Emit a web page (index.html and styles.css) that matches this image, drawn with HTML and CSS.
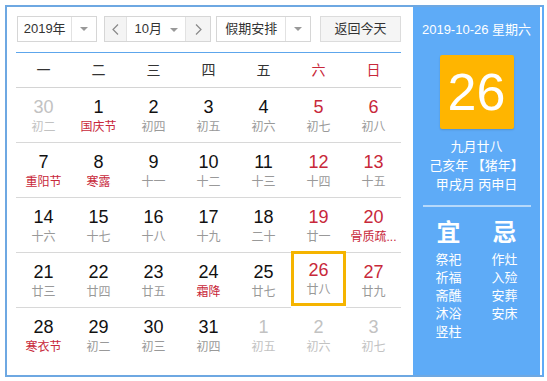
FILE: index.html
```html
<!DOCTYPE html>
<html lang="zh-CN">
<head>
    <meta charset="UTF-8">
    <title>万年历</title>
    <link rel="stylesheet" href="styles.css">
</head>
<body>
<div class="calendar">
    <div class="main">
        <!-- 顶部选择条 -->
        <div class="toolbar">
            <div class="select select-year">
                <span class="select-text">2019年</span>
                <span class="select-arrow"><i class="tri"></i></span>
            </div>
            <div class="month-box">
                <a href="javascript:;" class="nav-btn"><svg width="7" height="11" viewBox="0 0 7 11"><polyline points="6,0.5 1,5.5 6,10.5" fill="none" stroke="#888" stroke-width="1.2"/></svg></a>
                <div class="month-mid">10月 <i class="tri"></i></div>
                <a href="javascript:;" class="nav-btn nav-next"><svg width="7" height="11" viewBox="0 0 7 11"><polyline points="1,0.5 6,5.5 1,10.5" fill="none" stroke="#888" stroke-width="1.2"/></svg></a>
            </div>
            <div class="select select-holiday">
                <span class="select-text">假期安排</span>
                <span class="select-arrow"><i class="tri"></i></span>
            </div>
            <a href="javascript:;" class="btn-today">返回今天</a>
        </div>

        <!-- 星期 -->
        <ul class="week">
            <li>一</li><li>二</li><li>三</li><li>四</li><li>五</li><li class="red">六</li><li class="red">日</li>
        </ul>

        <!-- 日期 -->
        <ul class="days">
            <li class="other"><b>30</b><span>初二</span></li>
            <li><b>1</b><span class="fest">国庆节</span></li>
            <li><b>2</b><span>初四</span></li>
            <li><b>3</b><span>初五</span></li>
            <li><b>4</b><span>初六</span></li>
            <li class="weekend"><b>5</b><span>初七</span></li>
            <li class="weekend"><b>6</b><span>初八</span></li>

            <li><b>7</b><span class="fest">重阳节</span></li>
            <li><b>8</b><span class="fest">寒露</span></li>
            <li><b>9</b><span>十一</span></li>
            <li><b>10</b><span>十二</span></li>
            <li><b>11</b><span>十三</span></li>
            <li class="weekend"><b>12</b><span>十四</span></li>
            <li class="weekend"><b>13</b><span>十五</span></li>

            <li><b>14</b><span>十六</span></li>
            <li><b>15</b><span>十七</span></li>
            <li><b>16</b><span>十八</span></li>
            <li><b>17</b><span>十九</span></li>
            <li><b>18</b><span>二十</span></li>
            <li class="weekend"><b>19</b><span>廿一</span></li>
            <li class="weekend"><b>20</b><span class="fest">骨质疏...</span></li>

            <li><b>21</b><span>廿三</span></li>
            <li><b>22</b><span>廿四</span></li>
            <li><b>23</b><span>廿五</span></li>
            <li><b>24</b><span class="fest">霜降</span></li>
            <li><b>25</b><span>廿七</span></li>
            <li class="weekend today"><b>26</b><span>廿八</span></li>
            <li class="weekend"><b>27</b><span>廿九</span></li>

            <li><b>28</b><span class="fest">寒衣节</span></li>
            <li><b>29</b><span>初二</span></li>
            <li><b>30</b><span>初三</span></li>
            <li><b>31</b><span>初四</span></li>
            <li class="other"><b>1</b><span>初五</span></li>
            <li class="other"><b>2</b><span>初六</span></li>
            <li class="other"><b>3</b><span>初七</span></li>
        </ul>
    </div>

    <!-- 右侧详情 -->
    <div class="side">
        <p class="side-date">2019-10-26 星期六</p>
        <div class="big-day">26</div>
        <div class="lunar">
            <p>九月廿八</p>
            <p>己亥年 【猪年】</p>
            <p>甲戌月 丙申日</p>
        </div>
        <div class="side-line"></div>
        <div class="yiji">
            <ul>
                <li class="title">宜</li>
                <li>祭祀</li><li>祈福</li><li>斋醮</li><li>沐浴</li><li>竖柱</li>
            </ul>
            <ul>
                <li class="title">忌</li>
                <li>作灶</li><li>入殓</li><li>安葬</li><li>安床</li>
            </ul>
        </div>
    </div>
</div>
</body>
</html>
```

FILE: styles.css
```css
@charset "UTF-8";
/*初始化 reset*/
body,p,ul,li{margin:0;padding:0}
body{font:13px/1.5 "Liberation Sans", "Noto Sans CJK SC", sans-serif;color:#333;background:#fff;}
ul{list-style:none}
a{text-decoration:none;color:#333}
b{font-weight:normal}

.calendar{
    width:535px;
    height:368px;
    margin:5px;
    border:2px solid #6ea8e2;
    border-right-color:#5eabf7;
    display:flex;
}
.main{
    width:385px;
    padding:9px 12px 0 9px;
}

/*顶部选择条*/
.toolbar{
    height:26px;
    display:flex;
    margin-left:1px;
}
.select{
    height:24px;
    border:1px solid #d6d6d6;
    display:flex;
    background:#fff;
}
.select-text{
    line-height:24px;
    text-align:center;
}
.select-arrow{
    width:24px;
    border-left:1px solid #e2e2e2;
    display:flex;
    align-items:center;
    justify-content:center;
}
.tri{
    display:inline-block;
    width:0;
    height:0;
    border-left:4px solid transparent;
    border-right:4px solid transparent;
    border-top:4px solid #999;
    vertical-align:middle;
    margin-left:4px;
}
.select-arrow .tri{margin-left:0}
.select-year{width:78px}
.select-year .select-text{width:54px}
.month-box{
    width:105px;
    height:24px;
    margin-left:7px;
    border:1px solid #d6d6d6;
    display:flex;
}
.nav-btn{
    width:21px;
    background:#f4f4f4;
    display:flex;
    align-items:center;
    justify-content:center;
}
.nav-next{width:24px;border-left:1px solid #e2e2e2}
.nav-btn:first-child{border-right:1px solid #e2e2e2}
.month-mid{
    flex:1;
    line-height:24px;
    text-align:center;
    background:#fff;
}
.select-holiday{width:93px;margin-left:5px}
.select-holiday .select-text{width:69px}
.btn-today{
    width:79px;
    height:24px;
    margin-left:9px;
    border:1px solid #dcdcdc;
    background:#f5f5f5;
    line-height:24px;
    text-align:center;
}

/*星期*/
.week{
    margin-top:10px;
    border-top:1px solid #5da6ec;
    border-bottom:1px solid #d4d4d4;
    display:grid;
    grid-template-columns:repeat(7,55px);
    height:34px;
}
.week li{
    line-height:34px;
    text-align:center;
    font-size:14px;
    color:#333;
}
.week .red{color:#c8283a}

/*日期*/
.days{
    display:grid;
    grid-template-columns:repeat(7,55px);
    grid-auto-rows:55px;
}
.days li{
    border-bottom:1px solid #d8d8d8;
    display:flex;
    flex-direction:column;
    align-items:center;
    padding-top:9px;
    box-sizing:border-box;
}
.days li:nth-child(n+29){border-bottom:none}
.days b{
    font-size:18px;
    line-height:20px;
    color:#111;
}
.days span{
    margin-top:2px;
    font-size:12px;
    line-height:16px;
    color:#999;
    white-space:nowrap;
}
.days .fest{color:#c8283a}
.days .weekend b{color:#c8283a}
.days .other b,.days .other span{color:#c2c2c2}
.days .today{
    border:3px solid #f5b400;
    padding-top:6px;
    margin-top:-2px;
    height:55px;
}

/*右侧*/
.side{
    width:127px;
    background:#5eabf7;
    color:#fff;
    text-align:center;
    padding-top:13px;
}
.side-date{
    line-height:20px;
    font-size:13px;
}
.big-day{
    width:74px;
    height:74px;
    margin:15px auto 0;
    background:#ffb500;
    border-radius:2px;
    box-shadow:0 1px 2px rgba(0,0,0,.15);
    font-size:52px;
    line-height:74px;
}
.lunar{
    margin-top:8px;
    line-height:19px;
    font-size:13px;
}
.side-line{
    height:2px;
    margin:11px 9px 0 10px;
    background:rgba(255,255,255,.55);
}
.yiji{
    display:flex;
    justify-content:center;
    gap:16px;
    margin-top:11px;
}
.yiji ul{width:40px}
.yiji li{
    line-height:18px;
    font-size:13px;
}
.yiji .title{
    font-size:24px;
    font-weight:bold;
    line-height:30px;
    margin-bottom:3px;
}
```
